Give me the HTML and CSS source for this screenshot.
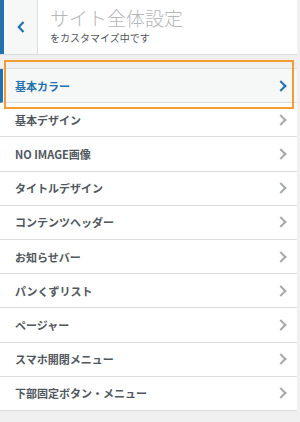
FILE: index.html
```html
<!DOCTYPE html>
<html lang="ja">
<head>
    <meta charset="UTF-8">
    <meta name="viewport" content="width=device-width, initial-scale=1.0">
    <title>サイト全体設定</title>
    <link rel="stylesheet" href="styles.css">
</head>
<body>
    <div class="panel">
        <header class="panel-head">
            <button class="back" type="button" aria-label="戻る">
                <svg width="10" height="14" viewBox="0 0 10 14"><path d="M7.5 2 L2.8 7 L7.5 12" fill="none" stroke="#2271b1" stroke-width="2.2"/></svg>
            </button>
            <div class="head-text">
                <h1>サイト全体設定</h1>
                <p>をカスタマイズ中です</p>
            </div>
        </header>

        <ul class="sections">
            <li class="section active">基本カラー<span class="chev"></span></li>
            <li class="section">基本デザイン<span class="chev"></span></li>
            <li class="section">NO IMAGE画像<span class="chev"></span></li>
            <li class="section">タイトルデザイン<span class="chev"></span></li>
            <li class="section">コンテンツヘッダー<span class="chev"></span></li>
            <li class="section">お知らせバー<span class="chev"></span></li>
            <li class="section">パンくずリスト<span class="chev"></span></li>
            <li class="section">ページャー<span class="chev"></span></li>
            <li class="section">スマホ開閉メニュー<span class="chev"></span></li>
            <li class="section">下部固定ボタン・メニュー<span class="chev"></span></li>
        </ul>

        <div class="highlight"></div>
    </div>
</body>
</html>
```

FILE: styles.css
```css
body {
    margin: 0;
    background-color: #f0f0f1;
    font-family: "Noto Sans CJK JP", "Noto Sans", sans-serif;
    color: #50575e;
}

.panel {
    position: relative;
    width: 297px;
}

.panel-head {
    display: flex;
    height: 54px;
    background-color: #fff;
    border-bottom: 1px solid #dcdcde;
}

.back {
    width: 38px;
    padding: 0;
    margin: 0;
    border: none;
    border-left: 4px solid #2271b1;
    border-right: 1px solid #dcdcde;
    background-color: #f6f7f7;
    display: flex;
    align-items: center;
    justify-content: center;
}

.head-text {
    padding: 6px 0 0 12px;
}

.head-text h1 {
    margin: 0;
    font-size: 19px;
    font-weight: 300;
    line-height: 24px;
    color: #b4b6b9;
}

.head-text p {
    margin: 1px 0 0 0;
    font-size: 10px;
    line-height: 14px;
    color: #50575e;
}

.sections {
    list-style: none;
    margin: 13px 0 0 0;
    padding: 0;
    background-color: #fff;
    border-top: 1px solid #dcdcde;
}

.section {
    display: flex;
    align-items: center;
    justify-content: space-between;
    height: 33.2px;
    padding: 0 10px 0 15px;
    border-bottom: 1px solid #dcdcde;
    font-size: 11px;
    font-weight: 700;
    color: #50575e;
}

.section.active {
    background-color: #f6f7f7;
    color: #2271b1;
    border-left: 3px solid #2271b1;
    padding-left: 12px;
}

.chev {
    width: 6px;
    height: 6px;
    margin-right: 2px;
    border-top: 2px solid #a7aaad;
    border-right: 2px solid #a7aaad;
    transform: rotate(45deg);
}

.section.active .chev {
    border-color: #2271b1;
}

.highlight {
    position: absolute;
    left: 4px;
    top: 60px;
    width: 286px;
    height: 45px;
    border: 2.5px solid #f39c32;
}
```
